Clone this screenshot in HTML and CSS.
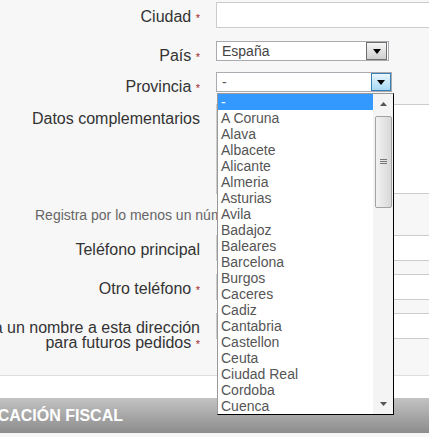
FILE: index.html
```html
<!DOCTYPE html>
<html lang="es">
<head>
    <meta charset="UTF-8">
    <meta name="viewport" content="width=device-width, initial-scale=1.0">
    <title>Dirección de envío</title>
    <link rel="stylesheet" href="styles.css">
</head>
<body>
    <div class="page">
        <div class="form">
            <div class="row">
                <label class="label">Ciudad <span class="req">*</span></label>
                <div class="input"></div>
            </div>
            <div class="row row-pais">
                <label class="label">País <span class="req">*</span></label>
                <div class="select select-pais">
                    <span class="select-text">España</span>
                    <span class="select-btn">
                        <svg width="8" height="5" viewBox="0 0 8 5"><path d="M0 0H8L4 5Z" fill="#000"/></svg>
                    </span>
                </div>
            </div>
            <div class="row row-prov">
                <label class="label">Provincia <span class="req">*</span></label>
                <div class="select-wrap">
                    <div class="select select-prov">
                        <span class="select-text">-</span>
                        <span class="select-btn hot">
                            <svg width="8" height="5" viewBox="0 0 8 5"><path d="M0 0H8L4 5Z" fill="#000"/></svg>
                        </span>
                    </div>
                    <div class="dropdown">
                        <ul class="options">
                            <li class="opt sel">-</li>
                            <li class="opt">A Coruna</li>
                            <li class="opt">Alava</li>
                            <li class="opt">Albacete</li>
                            <li class="opt">Alicante</li>
                            <li class="opt">Almeria</li>
                            <li class="opt">Asturias</li>
                            <li class="opt">Avila</li>
                            <li class="opt">Badajoz</li>
                            <li class="opt">Baleares</li>
                            <li class="opt">Barcelona</li>
                            <li class="opt">Burgos</li>
                            <li class="opt">Caceres</li>
                            <li class="opt">Cadiz</li>
                            <li class="opt">Cantabria</li>
                            <li class="opt">Castellon</li>
                            <li class="opt">Ceuta</li>
                            <li class="opt">Ciudad Real</li>
                            <li class="opt">Cordoba</li>
                            <li class="opt">Cuenca</li>
                        </ul>
                        <div class="sb">
                            <div class="sb-btn">
                                <svg width="7" height="4" viewBox="0 0 7 4"><path d="M0 4H7L3.5 0Z" fill="#555"/></svg>
                            </div>
                            <div class="sb-thumb">
                                <svg width="7" height="6" viewBox="0 0 7 6"><path d="M0 .5H7M0 2.5H7M0 4.5H7" stroke="#777" stroke-width="1"/></svg>
                            </div>
                            <div class="sb-track"></div>
                            <div class="sb-btn">
                                <svg width="7" height="4" viewBox="0 0 7 4"><path d="M0 0H7L3.5 4Z" fill="#555"/></svg>
                            </div>
                        </div>
                    </div>
                </div>
            </div>
            <div class="row row-tall">
                <label class="label">Datos complementarios</label>
                <div class="input textarea"></div>
            </div>
            <p class="hint">Registra por lo menos un número telefónico</p>
            <div class="row">
                <label class="label">Teléfono principal</label>
                <div class="input"></div>
            </div>
            <div class="row">
                <label class="label">Otro teléfono <span class="req">*</span></label>
                <div class="input"></div>
            </div>
            <div class="row row-last">
                <label class="label">Asigna un nombre a esta dirección<br>para futuros pedidos <span class="req">*</span></label>
                <div class="input"></div>
            </div>
        </div>
        <div class="sep"></div>
        <div class="section-head">IDENTIFICACIÓN FISCAL</div>
    </div>
</body>
</html>
```

FILE: styles.css
```css
html, body {
    margin: 0;
    padding: 0;
    overflow: hidden;
}
body {
    background-color: #f7f7f7;
    font-family: Arial, "Liberation Sans", sans-serif;
    color: #333;
}
.page {
    margin-left: -60px;
}
.form {
    padding-top: 2px;
}
.row {
    display: flex;
    align-items: flex-start;
    gap: 16px;
    height: 26px;
    margin-bottom: 13px;
}
.row-pais {
    height: 20px;
    margin-bottom: 11px;
}
.row-prov {
    height: 20px;
    margin-bottom: 12px;
}
.row-tall {
    height: 90px;
}
.row-last {
    height: 62px;
    margin-bottom: 0;
}
.label {
    flex: none;
    width: 260px;
    padding-top: 7px;
    text-align: right;
    font-size: 16px;
    line-height: 15px;
    white-space: nowrap;
}
.req {
    color: #a52a2a;
    font-size: 11px;
    line-height: 0;
}
.input {
    flex: none;
    box-sizing: border-box;
    width: 240px;
    height: 26px;
    background: #fff;
    border: 1px solid #ccc;
}
.textarea {
    height: 90px;
}
.hint {
    margin: 0 0 12px 95px;
    font-size: 14px;
    line-height: 16px;
    color: #666;
    white-space: nowrap;
}

/* selects */
.select {
    box-sizing: border-box;
    display: flex;
    align-items: stretch;
    height: 20px;
    background: #fff;
    border: 1px solid #a9abb0;
    font-size: 14px;
    color: #444;
}
.select-pais {
    width: 173px;
}
.select-prov {
    width: 176px;
    color: #555;
}
.select-text {
    flex: 1;
    padding-left: 5px;
    line-height: 18px;
}
.select-btn {
    box-sizing: border-box;
    display: flex;
    align-items: center;
    justify-content: center;
    width: 21px;
    border: 1px solid #6f6f6f;
    background: linear-gradient(#f6f6f6, #cfcfcf);
}
.select-pais .select-btn {
    margin: 0 1px 0 0;
}
.select-btn.hot {
    width: 20px;
    border-color: #3c7fb1;
    background: linear-gradient(#eaf6fd, #a7d9f5);
}
.select-wrap {
    position: relative;
}

/* open list */
.dropdown {
    position: absolute;
    top: 21px;
    left: 1px;
    box-sizing: border-box;
    display: flex;
    width: 177px;
    height: 322px;
    background: #fff;
    border: 1px solid #999;
    border-right-color: #000;
    border-bottom-color: #000;
}
.options {
    flex: 1;
    margin: 0;
    padding: 0;
    list-style: none;
    overflow: hidden;
}
.opt {
    height: 16px;
    padding-left: 3px;
    font-size: 14px;
    line-height: 16px;
    color: #555;
    white-space: nowrap;
}
.opt.sel {
    background: #3399ff;
    color: #fff;
}
.sb {
    display: flex;
    flex-direction: column;
    align-items: center;
    width: 20px;
    background: #f4f4f4;
}
.sb-btn {
    display: flex;
    align-items: center;
    justify-content: center;
    width: 100%;
    height: 20px;
}
.sb-thumb {
    box-sizing: border-box;
    display: flex;
    align-items: center;
    justify-content: center;
    width: 17px;
    height: 92px;
    margin-top: 2px;
    border: 1px solid #a2a2a2;
    border-radius: 2px;
    background: linear-gradient(to right, #f2f2f2, #d8d8d8);
}
.sb-track {
    flex: 1;
}

/* next section */
.sep {
    height: 22px;
    background: #fff;
    border-top: 1px solid #ddd;
}
.section-head {
    height: 35px;
    line-height: 35px;
    text-indent: -9px;
    background: linear-gradient(#c3c3c3, #8c8c8c);
    color: #fff;
    font-size: 16px;
    font-weight: bold;
    white-space: nowrap;
}
```
